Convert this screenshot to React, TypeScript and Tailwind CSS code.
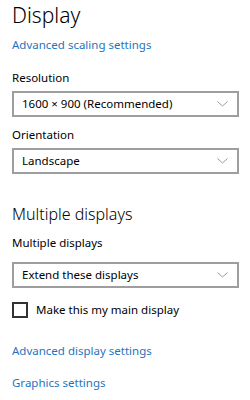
import { useState } from 'react';

const Chevron = () => (
  <svg width="11" height="6" viewBox="0 0 11 6" className="shrink-0">
    <path d="M0.5 0.5 L5.5 5 L10.5 0.5" fill="none" stroke="#9a9a9a" strokeWidth="1" />
  </svg>
);

const Dropdown = ({ value }: { value: string }) => (
  <div className="flex h-[26px] w-[227px] items-center justify-between border-2 border-[#9e9e9e] pl-[8px] pr-[9px] text-[11.5px] text-black">
    <span>{value}</span>
    <Chevron />
  </div>
);

export default function App() {
  const [main, setMain] = useState(false);

  return (
    <div
      className="flex h-[400px] w-[250px] flex-col bg-white pl-[12px] text-black"
      style={{ fontFamily: '"Noto Sans", "Open Sans", sans-serif' }}
    >
      {/* Display */}
      <h1 className="text-[21px] font-light leading-[30px]">Display</h1>
      <a className="mt-[7px] text-[11.5px] leading-[16px] text-[#1f74bd]">Advanced scaling settings</a>

      <div className="mt-[17px] text-[11.5px] leading-[16px]">Resolution</div>
      <div className="mt-[5px]">
        <Dropdown value="1600 × 900 (Recommended)" />
      </div>

      <div className="mt-[10px] text-[11.5px] leading-[16px]">Orientation</div>
      <div className="mt-[5px]">
        <Dropdown value="Landscape" />
      </div>

      {/* Multiple displays */}
      <h2 className="mt-[28px] text-[16px] font-light leading-[24px]">Multiple displays</h2>
      <div className="mt-[9px] text-[11.5px] leading-[16px]">Multiple displays</div>
      <div className="mt-[11px]">
        <Dropdown value="Extend these displays" />
      </div>

      <label className="mt-[14px] flex items-center gap-[8px] text-[11.5px] leading-[16px]">
        <span
          onClick={() => setMain(!main)}
          className="h-[16px] w-[16px] border-2 border-[#333333]"
        />
        Make this my main display
      </label>

      <a className="mt-[25px] text-[11.5px] leading-[16px] text-[#1f74bd]">Advanced display settings</a>
      <a className="mt-[16px] text-[11.5px] leading-[16px] text-[#1f74bd]">Graphics settings</a>
    </div>
  );
}
